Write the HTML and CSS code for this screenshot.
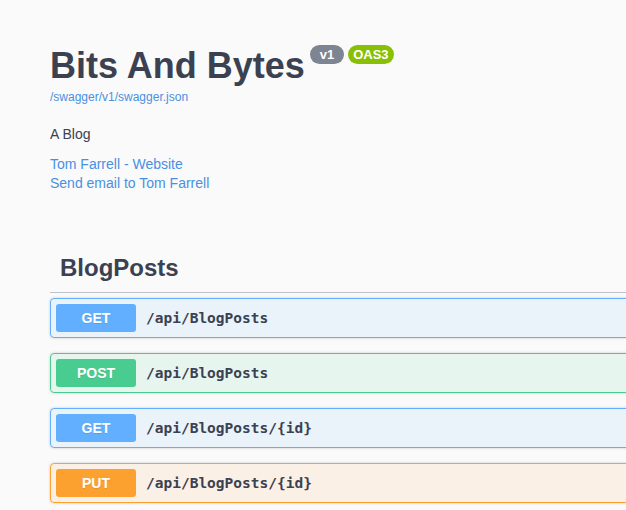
FILE: index.html
```html
<!DOCTYPE html>
<html lang="en">
<head>
<meta charset="utf-8">
<title>Bits And Bytes</title>
<link rel="stylesheet" href="styles.css">
</head>
<body>
<div class="page">
  <section class="info">
    <div class="title-row">
      <h2 class="title">Bits And Bytes</h2>
      <div class="badges">
        <span class="badge badge-version">v1</span>
        <span class="badge badge-oas">OAS3</span>
      </div>
    </div>
    <a class="base-url" href="#">/swagger/v1/swagger.json</a>
    <p class="description">A Blog</p>
    <div class="contacts">
      <a class="contact" href="#">Tom Farrell - Website</a>
      <a class="contact" href="#">Send email to Tom Farrell</a>
    </div>
  </section>

  <section class="tag-section">
    <h3 class="tag">BlogPosts</h3>
    <div class="opblock opblock-get">
      <span class="method">GET</span>
      <span class="path">/api/BlogPosts</span>
    </div>
    <div class="opblock opblock-post">
      <span class="method">POST</span>
      <span class="path">/api/BlogPosts</span>
    </div>
    <div class="opblock opblock-get">
      <span class="method">GET</span>
      <span class="path">/api/BlogPosts/{id}</span>
    </div>
    <div class="opblock opblock-put">
      <span class="method">PUT</span>
      <span class="path">/api/BlogPosts/{id}</span>
    </div>
  </section>
</div>
</body>
</html>
```

FILE: styles.css
```css
html, body {
  margin: 0;
  padding: 0;
  background: #fafafa;
  overflow: hidden;
}

body {
  font-family: "Liberation Sans", Arial, sans-serif;
  color: #3b4151;
}

.page {
  width: 700px;
  padding: 45px 0 0 50px;
}

.info {
  display: flex;
  flex-direction: column;
  align-items: flex-start;
}

.title-row {
  display: flex;
  align-items: flex-start;
}

.title {
  margin: 0;
  font-size: 36px;
  line-height: 41px;
  font-weight: 700;
  color: #3b4151;
}

.badges {
  display: flex;
  gap: 4px;
  margin-left: 5px;
}

.badge {
  display: inline-block;
  height: 19px;
  line-height: 19px;
  border-radius: 57px;
  color: #fff;
  font-size: 13px;
  font-weight: 700;
}

.badge-version {
  background: #7d8492;
  padding: 0 10px;
}

.badge-oas {
  background: #89bf04;
  padding: 0 5px;
}

.base-url {
  margin-top: 4px;
  font-size: 12px;
  line-height: 14px;
  color: #4990e2;
  text-decoration: none;
}

.description {
  margin: 21px 0 0;
  font-size: 14px;
  line-height: 19px;
}

.contacts {
  margin-top: 11px;
  display: flex;
  flex-direction: column;
}

.contact {
  font-size: 14px;
  line-height: 19px;
  color: #4990e2;
  text-decoration: none;
}

.tag-section {
  margin-top: 51px;
}

.tag {
  margin: 0 0 5px;
  padding: 10px 20px 10px 10px;
  font-size: 24px;
  line-height: 28px;
  font-weight: 700;
  color: #3b4151;
  border-bottom: 1px solid rgba(59, 65, 81, 0.3);
}

.opblock {
  display: flex;
  align-items: center;
  margin: 0 0 15px;
  padding: 5px;
  border: 1px solid;
  border-radius: 4px;
  box-shadow: 0 0 3px rgba(0, 0, 0, 0.19);
}

.opblock-get {
  border-color: #61affe;
  background: rgba(97, 175, 254, 0.1);
}

.opblock-get .method {
  background: #61affe;
}

.opblock-post {
  border-color: #49cc90;
  background: rgba(73, 204, 144, 0.1);
}

.opblock-post .method {
  background: #49cc90;
}

.opblock-put {
  border-color: #fca130;
  background: rgba(252, 161, 48, 0.1);
}

.opblock-put .method {
  background: #fca130;
}

.method {
  min-width: 80px;
  padding: 6px 0;
  border-radius: 3px;
  text-align: center;
  font-size: 14px;
  line-height: 16px;
  font-weight: 700;
  color: #fff;
  text-shadow: 0 1px 0 rgba(0, 0, 0, 0.1);
}

.path {
  padding: 0 10px;
  font-family: "DejaVu Sans Mono", "Liberation Mono", monospace;
  font-size: 14.5px;
  font-weight: 700;
  color: #3b4151;
}
```
